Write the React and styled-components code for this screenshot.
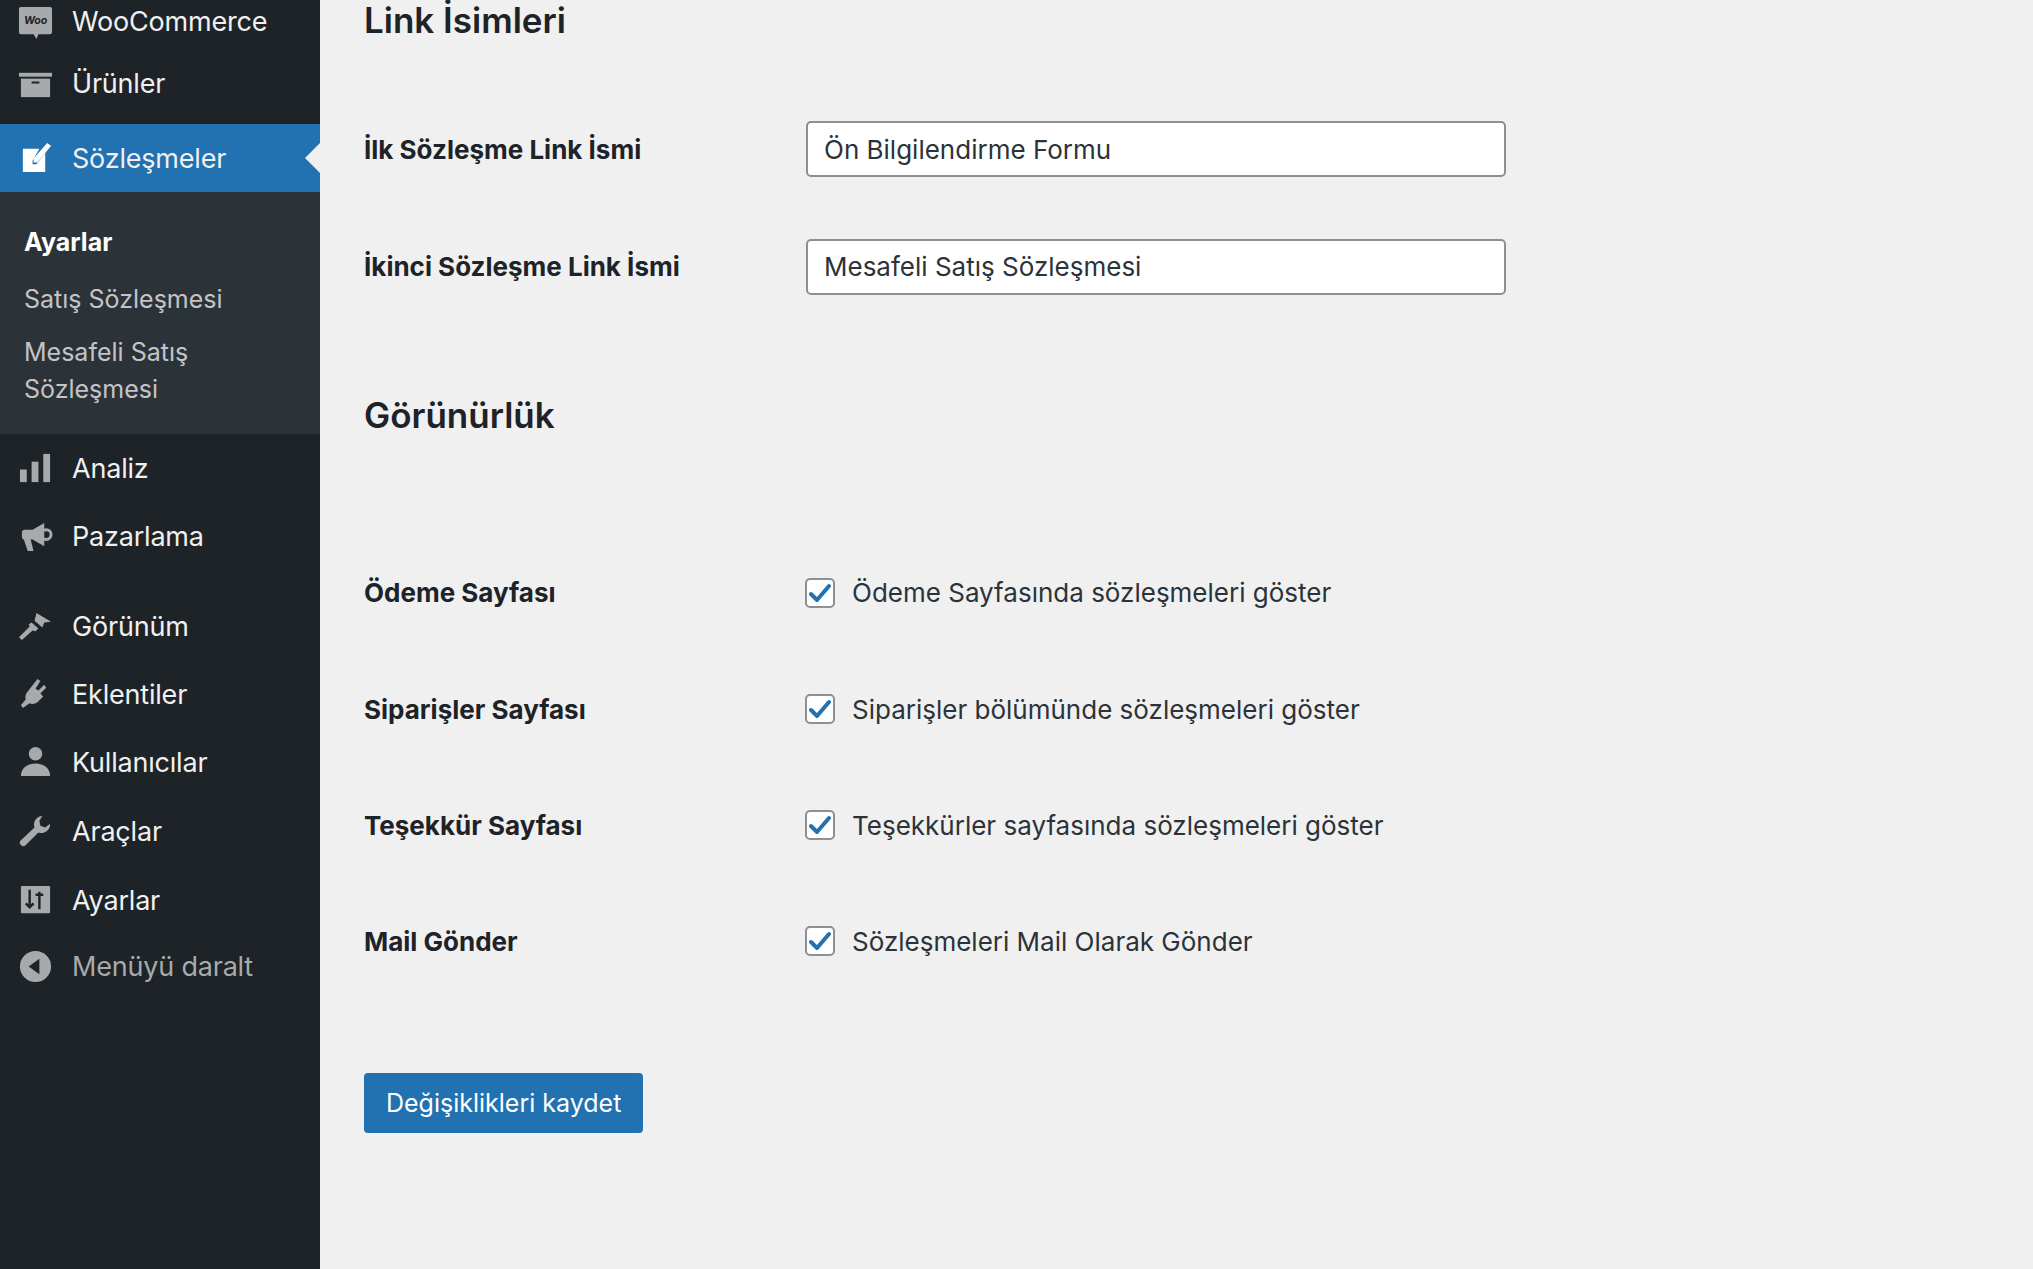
import React from "react";
import styled, { createGlobalStyle } from "styled-components";

const Global = createGlobalStyle`
  html, body { margin: 0; padding: 0; background: #f0f0f1; }
  body { font-family: Inter, "Noto Sans", sans-serif; color: #1d2327; }
`;

const Layout = styled.div`
  display: flex;
  min-height: 1269px;
`;

const Sidebar = styled.nav`
  width: 320px;
  flex-shrink: 0;
  background: #1d2327;
  display: flex;
  flex-direction: column;
`;

const MenuItem = styled.div`
  position: relative;
  height: ${p => p.$h || 68}px;
  display: flex;
  align-items: center;
  gap: 19px;
  padding-left: 18px;
  margin-top: ${p => p.$mt || 0}px;
  background: ${p => (p.$active ? "#2271b1" : "transparent")};
  color: ${p => (p.$muted ? "#a7aaad" : "#f0f0f1")};
  font-size: 27px;
  letter-spacing: -0.2px;
  svg { width: 35px; height: 35px; flex-shrink: 0; color: ${p => (p.$active ? "#fff" : "#a7aaad")}; }
  ${p => p.$active && `
    &::after {
      content: "";
      position: absolute;
      right: 0; top: 50%;
      transform: translateY(-50%);
      border: 15px solid transparent;
      border-right-color: #f0f0f1;
    }
  `}
`;

const Submenu = styled.div`
  background: #2c3338;
  padding: 22px 0 26px 24px;
  display: flex;
  flex-direction: column;
  gap: 0;
`;

const SubItem = styled.div`
  font-size: 25px;
  line-height: 37px;
  padding: ${p => p.$pad || "10px 0"};
  color: ${p => (p.$current ? "#fff" : "#c3c4c7")};
  font-weight: ${p => (p.$current ? 700 : 400)};
`;

const Main = styled.main`
  flex: 1;
  padding: 0 0 0 44px;
`;

const H2 = styled.h2`
  font-size: 35px;
  font-weight: 600;
  margin: ${p => p.$m};
  line-height: 40px;
  color: #1d2327;
`;

const Row = styled.div`
  display: grid;
  grid-template-columns: 442px 700px;
  align-items: center;
  height: ${p => p.$h}px;
`;

const Label = styled.label`
  font-size: 26px;
  font-weight: 700;
  color: #1d2327;
`;

const Input = styled.div`
  height: 56px;
  box-sizing: border-box;
  border: 2px solid #8c8f94;
  border-radius: 5px;
  background: #fff;
  display: flex;
  align-items: center;
  padding: 0 16px;
  font-size: 26px;
  color: #2c3338;
`;

const Check = styled.div`
  display: flex;
  align-items: center;
  gap: 17px;
  margin-left: -1px;
  font-size: 26px;
  color: #2c3338;
`;

const Box = styled.span`
  width: 30px; height: 30px;
  box-sizing: border-box;
  border: 2px solid #8c8f94;
  border-radius: 5px;
  background: #fff;
  display: flex; align-items: center; justify-content: center;
`;

const Button = styled.button`
  margin-top: 74px;
  height: 60px;
  padding: 0 22px;
  background: #2271b1;
  color: #fff;
  border: none;
  border-radius: 4px;
  font-family: inherit;
  font-size: 25px;
`;

const I = {
  woo: (
    <svg viewBox="0 0 36 36"><path d="M3 3h30a2 2 0 0 1 2 2v24a2 2 0 0 1-2 2H21l-2 5-3-5H3a2 2 0 0 1-2-2V5a2 2 0 0 1 2-2z" fill="currentColor"/><text x="18" y="21" fontSize="11" fontWeight="700" textAnchor="middle" fill="#1d2327" fontFamily="Inter" fontStyle="italic">Woo</text></svg>
  ),
  box: (
    <svg viewBox="0 0 36 36" fill="currentColor"><rect x="1" y="7" width="34" height="4"/><rect x="3" y="13" width="30" height="19"/><rect x="14" y="16" width="8" height="2" fill="#1d2327"/></svg>
  ),
  edit: (
    <svg viewBox="0 0 36 36" fill="currentColor"><path d="M5 8h17l-7 12v4h4l9-12v20H5z"/><path d="M30 2l4 3-14 17h-4v-4z"/></svg>
  ),
  chart: (
    <svg viewBox="0 0 36 36" fill="currentColor"><rect x="2" y="19" width="7" height="13"/><rect x="14" y="11" width="7" height="21"/><rect x="26" y="3" width="7" height="29"/></svg>
  ),
  mega: (
    <svg viewBox="0 0 36 36" fill="currentColor"><path d="M4 14c0-2 1-3 3-3h8l12-7v24l-12-7h-2l3 12h-6l-4-12c-1 0-2-1-2-3z"/><circle cx="29" cy="16" r="5" fill="none" stroke="currentColor" strokeWidth="3"/></svg>
  ),
  brush: (
    <svg viewBox="0 0 36 36" fill="currentColor"><path d="M19 4l15 9-7 1 -2 5-8-7z"/><path d="M14 14l7 6-3 3-3-1-11 10-3-3 11-11-1-2z"/></svg>
  ),
  plug: (
    <svg viewBox="0 0 36 36" fill="currentColor"><path d="M20 2l3 2-5 8 3 2 6-6 2 3-6 6 3 3-6 6c-3 2-6 2-8 1l-7 5-2-3 5-6c-1-3 0-6 2-8z"/></svg>
  ),
  user: (
    <svg viewBox="0 0 36 36" fill="currentColor"><circle cx="18" cy="9" r="7"/><path d="M3 32c0-8 6-13 15-13s15 5 15 13z"/></svg>
  ),
  wrench: (
    <svg viewBox="0 0 36 36" fill="currentColor"><path d="M25 2a9 9 0 0 0-8 12L3 27a3 3 0 0 0 5 5l13-13a9 9 0 0 0 12-9l-5 4-5-2-1-5z"/></svg>
  ),
  settings: (
    <svg viewBox="0 0 36 36"><rect x="3" y="3" width="30" height="28" rx="1" fill="currentColor"/><path d="M12 7v18M8 21l4 4 4-4M22 27V9M18 12h8" stroke="#1d2327" strokeWidth="2.5" fill="none"/></svg>
  ),
  collapse: (
    <svg viewBox="0 0 36 36"><circle cx="18" cy="18" r="16" fill="currentColor"/><path d="M22 10v16l-11-8z" fill="#1d2327"/></svg>
  ),
};

const Tick = () => (
  <svg width="22" height="20" viewBox="0 0 22 20"><path d="M2 11l6 6L20 3" stroke="#2271b1" strokeWidth="4" fill="none" strokeLinecap="round" strokeLinejoin="round"/></svg>
);

const menu = [
  ["woo", "WooCommerce", 42],
  ["box", "Ürünler", 82],
];
const menu2 = [
  ["chart", "Analiz", 68, 0],
  ["mega", "Pazarlama", 68, 0],
  ["brush", "Görünüm", 68, 22],
  ["plug", "Eklentiler", 68, 0],
  ["user", "Kullanıcılar", 69, 0],
  ["wrench", "Araçlar", 69, 0],
  ["settings", "Ayarlar", 69, 0],
];

const checks = [
  ["Ödeme Sayfası", "Ödeme Sayfasında sözleşmeleri göster"],
  ["Siparişler Sayfası", "Siparişler bölümünde sözleşmeleri göster"],
  ["Teşekkür Sayfası", "Teşekkürler sayfasında sözleşmeleri göster"],
  ["Mail Gönder", "Sözleşmeleri Mail Olarak Gönder"],
];

export default function App() {
  return (
    <>
      <Global />
      <Layout>
        <Sidebar>
          {menu.map(([ic, t, h]) => (
            <MenuItem key={t} $h={h}>{I[ic]}<span>{t}</span></MenuItem>
          ))}
          <MenuItem $active $h={68}>{I.edit}<span>Sözleşmeler</span></MenuItem>
          <Submenu>
            <SubItem $current>Ayarlar</SubItem>
            <SubItem $pad="10px 0">Satış Sözleşmesi</SubItem>
            <SubItem $pad="6px 0 0">Mesafeli Satış<br />Sözleşmesi</SubItem>
          </Submenu>
          {menu2.map(([ic, t, h, mt]) => (
            <MenuItem key={t} $h={h} $mt={mt}>{I[ic]}<span>{t}</span></MenuItem>
          ))}
          <MenuItem $muted $h={62}>{I.collapse}<span>Menüyü daralt</span></MenuItem>
        </Sidebar>
        <Main>
          <H2 $m="0 0 0">Link İsimleri</H2>
          <Row $h={118} style={{ marginTop: 90 - 40 }}>
            <Label>İlk Sözleşme Link İsmi</Label>
            <Input>Ön Bilgilendirme Formu</Input>
          </Row>
          <Row $h={121} style={{ marginTop: -2 }}>
            <Label>İkinci Sözleşme Link İsmi</Label>
            <Input>Mesafeli Satış Sözleşmesi</Input>
          </Row>
          <H2 $m="68px 0 0">Görünürlük</H2>
          <Row $h={117} style={{ marginTop: 99 }}>
            <Label>{checks[0][0]}</Label>
            <Check><Box><Tick /></Box>{checks[0][1]}</Check>
          </Row>
          {checks.slice(1).map(([l, c]) => (
            <Row key={l} $h={116}>
              <Label>{l}</Label>
              <Check><Box><Tick /></Box>{c}</Check>
            </Row>
          ))}
          <Button>Değişiklikleri kaydet</Button>
        </Main>
      </Layout>
    </>
  );
}
